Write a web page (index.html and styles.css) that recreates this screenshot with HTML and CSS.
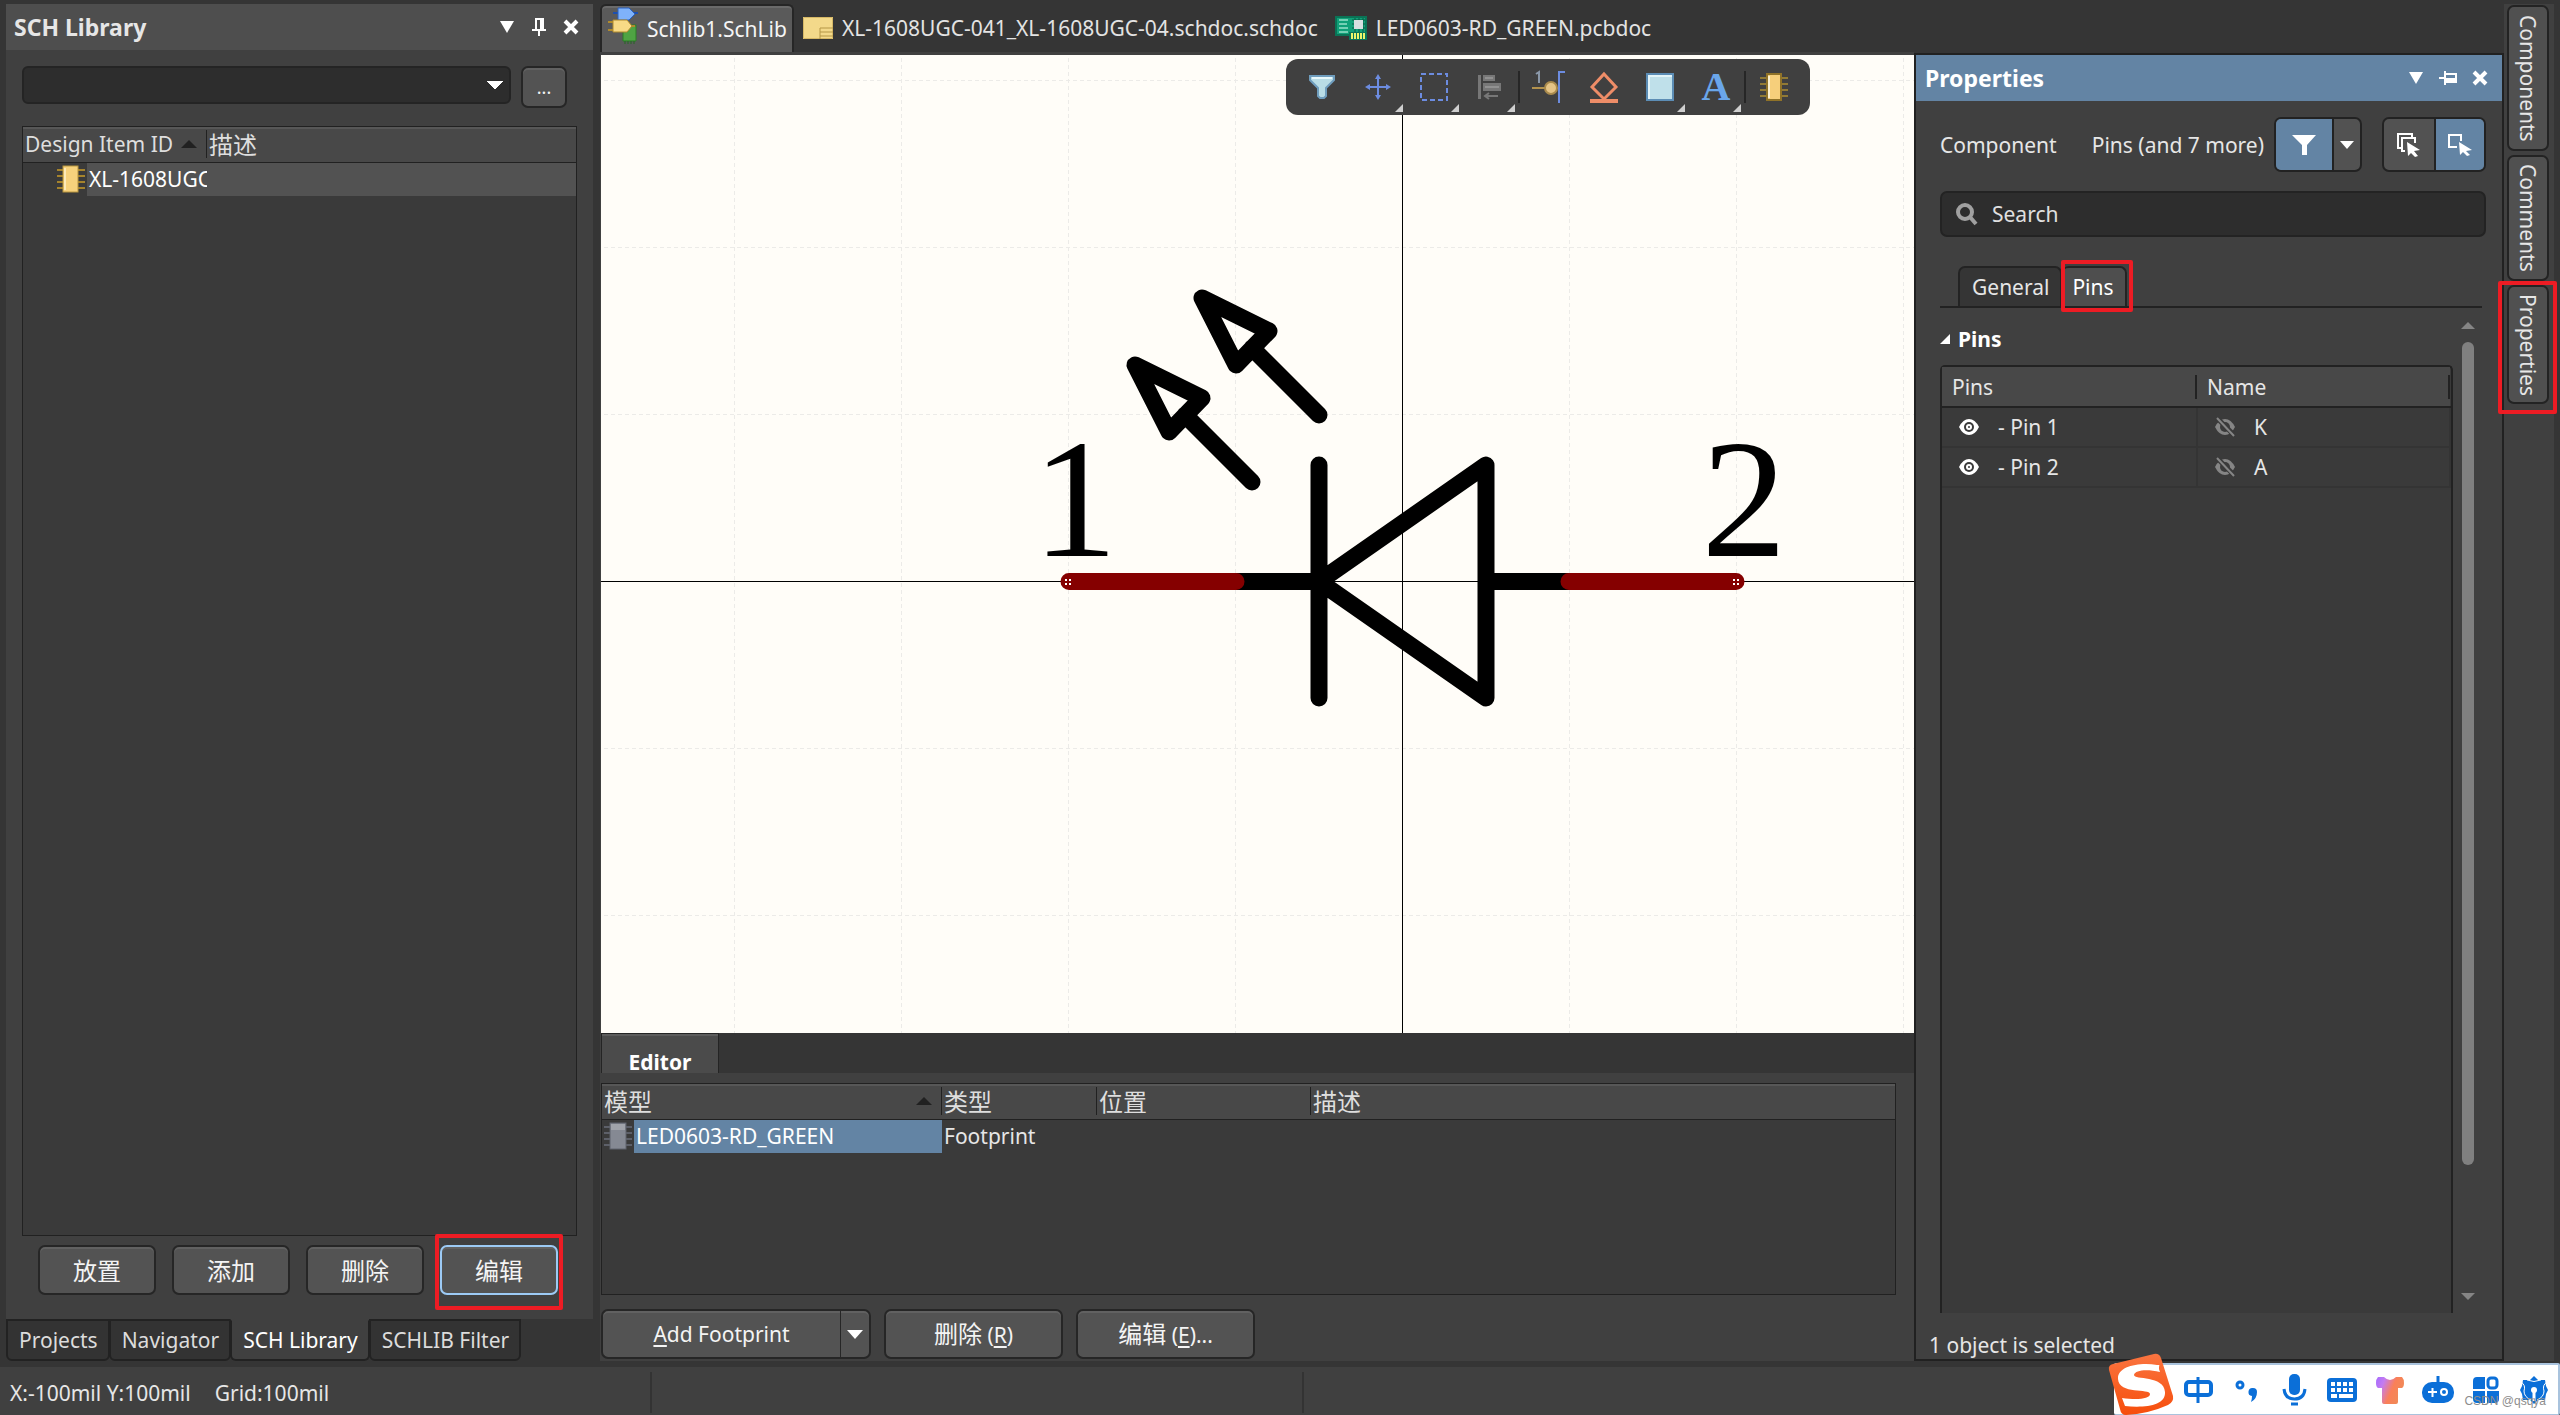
FILE: index.html
```html
<!DOCTYPE html>
<html lang="zh-CN">
<head>
<meta charset="utf-8">
<title>Schlib1.SchLib</title>
<link rel="stylesheet" href="styles.css">
</head>
<body>
<main class="workspace">
  <section class="library">
    <div class="library-panel">
      <header class="panel-title">
        <h2>SCH Library</h2>
        <button class="icon-btn" aria-label="Menu"><svg width="14" height="12"><path d="M0 0h14L7 12z" fill="#fff"/></svg></button>
        <button class="icon-btn" aria-label="Pin"><svg width="14" height="18"><path d="M3 0h9v11h2v2H8v5H6v-5H0v-2h3z" fill="#fff"/><path d="M5 2h3v9H5z" fill="#4e4e4e"/></svg></button>
        <button class="icon-btn" aria-label="Close"><svg width="16" height="16"><path d="M2 2l12 12M14 2L2 14" stroke="#fff" stroke-width="4"/></svg></button>
      </header>
      <div class="library-body">
        <div class="library-filter">
          <select class="combo" aria-label="Library"><option></option></select>
          <button class="btn more">...</button>
        </div>
        <div class="grid-box library-grid">
          <table class="data">
            <colgroup><col class="c-id"><col></colgroup>
            <thead><tr><th><span class="th-cell">Design Item ID<i class="sort"></i></span></th><th class="cjk">描述</th></tr></thead>
            <tbody><tr><td><span class="item">
              <svg width="28" height="28"><path d="M0 5h28M0 11h28M0 17h28M0 23h28" stroke="#a5832c" stroke-width="2"/><rect x="6" y="1" width="15" height="26" fill="#f7d27c" stroke="#b8953f"/><path d="M8 3v22" stroke="#fdeab8" stroke-width="2"/></svg>
              <span class="item-name">XL-1608UGC</span></span></td><td class="lit"></td></tr></tbody>
          </table>
        </div>
        <div class="library-actions">
          <button class="btn cjk">放置</button>
          <button class="btn cjk">添加</button>
          <button class="btn cjk">删除</button>
          <button class="btn cjk focused marked">编辑</button>
        </div>
      </div>
    </div>
    <nav class="panel-tabs">
      <button>Projects</button><button>Navigator</button><button class="on">SCH Library</button><button>SCHLIB Filter</button>
    </nav>
  </section>

  <section class="document">
    <nav class="doc-tabs">
      <button class="doc-tab on">
        <svg width="30" height="46"><path d="M5 7h25M6 17h8" stroke="#1d4fae" stroke-width="2"/><path d="M10 2h11l6 6-6 6H10z" fill="#7fb2fa" stroke="#2a61bf"/><path d="M15 19h13v16H15z" fill="#4fa343" stroke="#2b7d27"/><path d="M17 35v3M20 35v3M23 35v3M26 35v3" stroke="#226b20"/><path d="M0 16h8M0 24h8M20 20h7" stroke="#b08a2d" stroke-width="2"/><path d="M5 14h14l5 6-5 6H5z" fill="#f8da86" stroke="#b08a2d"/></svg>
        Schlib1.SchLib</button>
      <button class="doc-tab">
        <svg width="30" height="24"><path d="M0 1h30v22H0z" fill="#f3d98a"/><path d="M.5 1.500h29v21H.5z" fill="none" stroke="#d6b866"/><path d="M17 23V12h13M17 16h13M17 20h13" stroke="#b59747" fill="none"/></svg>
        XL-1608UGC-041_XL-1608UGC-04.schdoc.schdoc</button>
      <button class="doc-tab">
        <svg width="32" height="26"><path d="M0 1h32v20H0z" fill="#10a078"/><path d="M1 2h30v18H1z" fill="none" stroke="#0a7356" stroke-width="2"/><path d="M4 5h9M4 9h8M4 13h9M4 17h9" stroke="#d9fff0"/><path d="M17 5h13M17 9h13M17 13h13M20 3v14M24 3v14M28 3v14" stroke="#075b43"/><path d="M19 5h9v9h-9z" fill="#d5dfe0"/><path d="M14 17h18v8H14z" fill="#08765a"/><path d="M17 18v6M20 18v6M23 18v6M26 18v6M29 18v6" stroke="#e9f56b" stroke-width="2"/></svg>
        LED0603-RD_GREEN.pcbdoc</button>
    </nav>
    <div class="document-body">
      <div class="canvas">
        <svg class="drawing" viewBox="601 55 1313 978" preserveAspectRatio="xMidYMid slice">
          <g stroke="#ecebe8" stroke-dasharray="4 3">
            <path d="M734.500 58V1033M901.500 58V1033M1068.500 58V1033M1235.500 58V1033M1569.500 58V1033M1736.500 58V1033M1903.500 58V1033M604 80.500H1914M604 247.500H1914M604 414.500H1914M604 748.500H1914M604 915.500H1914"/>
          </g>
          <path d="M1402.500 55V1033M601 581.500H1914" stroke="#000"/>
          <g fill="none" stroke="#000" stroke-width="17" stroke-linecap="round" stroke-linejoin="round">
            <path d="M1235 581.500H1319M1486 581.500H1570M1319 465V698M1486 465V698L1319 581.500z"/>
            <path d="M1202 298L1269 331L1236 365zM1252 348L1319 415"/>
            <path d="M1135 365L1202 398L1169 432zM1185 415L1252 482"/>
            <path d="M1069 581.500H1236M1569 581.500H1736" stroke="#850000"/>
          </g>
          <path d="M1065 579h2v2h-2zM1069 579h2v2h-2zM1065 583h2v2h-2zM1069 583h2v2h-2zM1733 579h2v2h-2zM1737 579h2v2h-2zM1733 583h2v2h-2zM1737 583h2v2h-2z" fill="#fff"/>
          <text class="pin-no" x="1075" y="556" text-anchor="middle">1</text>
          <text class="pin-no" x="1744" y="556" text-anchor="middle">2</text>
        </svg>
        <div class="toolbar">
          <button aria-label="Filter"><svg width="32" height="32"><path d="M4 5h24v4l-8 8v8l-2 2h-4l-2-2v-8L4 9z" fill="#b9dde6" stroke="#6f9dbd" stroke-width="2"/><path d="M6 7h20" stroke="#e8f8fb" stroke-width="2"/></svg></button>
          <button class="has-menu" aria-label="Move"><svg width="32" height="32"><path d="M16 5v22M5 16h22" stroke="#6c8ce0" stroke-width="2"/><path d="M16 3l3 5h-6zM16 29l3-5h-6zM3 16l5-3v6zM29 16l-5-3v6z" fill="#6c8ce0"/></svg></button>
          <button class="has-menu" aria-label="Select"><svg width="32" height="32"><rect x="3" y="3" width="26" height="26" fill="none" stroke="#6c8ce0" stroke-width="2" stroke-dasharray="5 3"/></svg></button>
          <button class="has-menu" aria-label="Align"><svg width="32" height="32"><path d="M4 4h3v24H4zM9 4h12v6H9zM9 12h18v8H9z" fill="#777"/><path d="M11 7h8M11 16h14" stroke="#919191" stroke-width="2"/><path d="M11 25h13M15 22l-4 3 4 3" stroke="#777" stroke-width="2" fill="none"/></svg></button>
          <i class="divider"></i>
          <button aria-label="Place pin"><svg width="34" height="34"><path d="M1 18h15" stroke="#b3924d" stroke-width="2"/><circle cx="20" cy="18" r="6" fill="#e5c486" stroke="#a98a4c" stroke-width="2"/><path d="M28 33V2h6" stroke="#6c8ce0" stroke-width="2" fill="none"/><path d="M5 4l3-2v11" stroke="#8a97a8" stroke-width="2" fill="none"/></svg></button>
          <button aria-label="Directive"><svg width="34" height="34"><path d="M17 4l12 13-12 12L5 17z" fill="none" stroke="#ee8d68" stroke-width="3"/><path d="M3 29h28v4H3z" fill="#ee8d68"/></svg></button>
          <button class="has-menu" aria-label="Rectangle"><svg width="32" height="32"><rect x="3" y="3" width="26" height="26" fill="#bfe0ea" stroke="#5c8db5" stroke-width="2"/><path d="M5 28V5h23" fill="none" stroke="#e3f5fa" stroke-width="2"/></svg></button>
          <button class="has-menu text-tool" aria-label="Text">A</button>
          <i class="divider"></i>
          <button aria-label="Component"><svg width="32" height="32"><path d="M2 7h28M2 13h28M2 19h28M2 25h28" stroke="#917a35" stroke-width="2"/><rect x="9" y="3" width="14" height="26" fill="#f6cf7b" stroke="#8f7228" stroke-width="2"/><path d="M11 5v22" stroke="#fdf1cf" stroke-width="2"/></svg></button>
        </div>
      </div>
      <div class="editor">
        <div class="editor-tabs"><button>Editor</button></div>
        <div class="grid-box editor-grid">
          <table class="data">
            <colgroup><col class="c-model"><col class="c-type"><col class="c-place"><col></colgroup>
            <thead><tr><th class="cjk"><span class="th-cell">模型<i class="sort"></i></span></th><th class="cjk">类型</th><th class="cjk">位置</th><th class="cjk">描述</th></tr></thead>
            <tbody><tr><td><span class="item">
              <svg width="28" height="28"><path d="M0 5h28M0 11h28M0 17h28M0 23h28" stroke="#5d6069" stroke-width="2"/><rect x="6" y="1" width="16" height="26" fill="#858993" stroke="#5f636d"/><path d="M7 8h14V2H7z" fill="#a0a3aa"/></svg>
              <span class="item-name">LED0603-RD_GREEN</span></span></td><td>Footprint</td><td></td><td></td></tr></tbody>
          </table>
        </div>
        <div class="editor-actions">
          <div class="split"><button class="btn main"><span><u>A</u>dd Footprint</span></button><button class="btn drop" aria-label="More"><svg width="16" height="9"><path d="M0 0h16L8 9z" fill="#fff"/></svg></button></div>
          <button class="btn wide"><span><span class="cjk">删除</span> (<u>R</u>)</span></button>
          <button class="btn wide"><span><span class="cjk">编辑</span> (<u>E</u>)...</span></button>
        </div>
      </div>
    </div>
  </section>

  <aside class="properties">
    <header class="panel-title active">
      <h2>Properties</h2>
      <button class="icon-btn" aria-label="Menu"><svg width="14" height="12"><path d="M0 0h14L7 12z" fill="#fff"/></svg></button>
      <button class="icon-btn" aria-label="Pin"><svg width="18" height="14"><path d="M18 2v10H7v2H5V8H0V6h5V0h2v2z" fill="#fff"/><path d="M7 4h9v3H7z" fill="#6384a4"/></svg></button>
      <button class="icon-btn" aria-label="Close"><svg width="16" height="16"><path d="M2 2l12 12M14 2L2 14" stroke="#fff" stroke-width="4"/></svg></button>
    </header>
    <div class="object-row">
      <span>Component</span><span class="scope">Pins (and 7 more)</span>
      <div class="group"><button class="blue filter" aria-label="Filter"><svg width="24" height="22"><path d="M0 1h24l-9 10v10H10V11z" fill="#fff"/></svg></button><button class="narrow" aria-label="Filter menu"><svg width="14" height="8"><path d="M0 0h14L7 8z" fill="#fff"/></svg></button></div>
      <div class="group"><button class="pick" aria-label="Select all kinds"><svg width="26" height="26"><path d="M6 16H2V2h14v3M9 19H6V6h13v5" fill="none" stroke="#fff" stroke-width="2"/><path d="M11 10l13 8-6 1 4 5-3 1-4-4-3 3z" fill="#fff"/></svg></button><button class="blue pick" aria-label="Select one"><svg width="26" height="26"><path d="M10 15H2V3h12v6" fill="none" stroke="#fff" stroke-width="2"/><path d="M12 10l13 8-6 1 4 4-3 1-4-4-3 3z" fill="#fff"/></svg></button></div>
    </div>
    <label class="search"><svg width="24" height="24"><circle cx="10" cy="10" r="7" fill="none" stroke="#a0a0a0" stroke-width="4"/><path d="M15 15l6 7" stroke="#a0a0a0" stroke-width="4"/></svg><input type="text" placeholder="Search" aria-label="Search"></label>
    <nav class="prop-tabs"><button>General</button><button class="on marked">Pins</button></nav>
    <div class="prop-body">
      <div class="prop-main">
        <h3><svg width="10" height="10"><path d="M10 0v10H0z" fill="#fff"/></svg>Pins</h3>
        <div class="pin-box">
          <table class="pins">
            <colgroup><col class="c-pin"><col></colgroup>
            <thead><tr><th>Pins</th><th>Name</th></tr></thead>
            <tbody>
              <tr><td><span class="cell"><svg class="eye" width="20" height="18"><path d="M0 9Q4 1 10 1t10 8Q16 17 10 17T0 9z" fill="#fff"/><circle cx="10" cy="9" r="5" fill="#3a3a3a"/><circle cx="10" cy="9" r="3" fill="#fff"/><circle cx="10" cy="9" r="1" fill="#3a3a3a"/></svg>- Pin 1</span></td><td><span class="cell"><svg class="hid" width="20" height="20"><path d="M0 10Q4 2 10 2t10 8Q16 18 10 18T0 10z" fill="#858585"/><circle cx="10" cy="10" r="5" fill="#3a3a3a"/><path d="M2 1l18 18" stroke="#3a3a3a" stroke-width="5"/><path d="M2 1l17 18" stroke="#858585" stroke-width="2"/></svg>K</span></td></tr>
              <tr><td><span class="cell"><svg class="eye" width="20" height="18"><path d="M0 9Q4 1 10 1t10 8Q16 17 10 17T0 9z" fill="#fff"/><circle cx="10" cy="9" r="5" fill="#3a3a3a"/><circle cx="10" cy="9" r="3" fill="#fff"/><circle cx="10" cy="9" r="1" fill="#3a3a3a"/></svg>- Pin 2</span></td><td><span class="cell"><svg class="hid" width="20" height="20"><path d="M0 10Q4 2 10 2t10 8Q16 18 10 18T0 10z" fill="#858585"/><circle cx="10" cy="10" r="5" fill="#3a3a3a"/><path d="M2 1l18 18" stroke="#3a3a3a" stroke-width="5"/><path d="M2 1l17 18" stroke="#858585" stroke-width="2"/></svg>A</span></td></tr>
            </tbody>
          </table>
        </div>
      </div>
      <div class="scroll"><i class="up"></i><div class="track"><div class="thumb"></div></div><i class="down"></i></div>
    </div>
    <footer>1 object is selected</footer>
  </aside>

  <nav class="side-tabs"><button class="s1">Components</button><button class="s2">Comments</button><button class="s3 marked">Properties</button></nav>
</main>

<footer class="status"><div class="st-a"><span>X:-100mil Y:100mil</span><span>Grid:100mil</span></div><div class="st-b"></div><div></div></footer>

<div class="ime">
  <svg class="ime-logo" width="66" height="62" viewBox="0 0 66 62"><defs><linearGradient id="lg" x1="0" y1="1" x2="0" y2="0"><stop offset="0" stop-color="#f64e0c"/><stop offset="1" stop-color="#fa7440"/></linearGradient></defs><path d="M5 11L46 1q5-1 7 4l12 38q1 6-5 9-20 9-42 10-5 0-6-6L1 17q-1-5 4-6z" fill="url(#lg)"/><path d="M49 12c5 0 0 0 3 7-13-3-25-2-26 3 0 5 30 0 31 17 1 14-21 16-40 14l-3-8c15 2 28 1 28-4 0-6-31 1-32-15-1-13 22-17 39-14z" fill="#fff"/></svg>
  <button aria-label="中文"><svg width="32" height="32"><rect x="4" y="8" width="25" height="13" rx="3" fill="none" stroke="#0b6fd8" stroke-width="4"/><path d="M16 3v26" stroke="#0b6fd8" stroke-width="3"/></svg></button>
  <button aria-label="标点"><svg width="32" height="32"><circle cx="10" cy="11" r="3" fill="none" stroke="#0b6fd8" stroke-width="3"/><path d="M23 14a4 4 0 0 1 4 4q0 7-6 10 1-3 1-6a4 4 0 0 1 1-8z" fill="#0b6fd8"/></svg></button>
  <button aria-label="语音"><svg width="32" height="36"><rect x="11" y="2" width="11" height="21" rx="5" fill="#0b6fd8"/><path d="M6 17q1 10 10.500 10T27 17" fill="none" stroke="#0b6fd8" stroke-width="3"/><path d="M13 32h7" stroke="#0b6fd8" stroke-width="3"/></svg></button>
  <button aria-label="键盘"><svg width="32" height="32"><rect x="1" y="4" width="30" height="24" rx="4" fill="#0b6fd8"/><path d="M5 8h4v4H5zM11 8h4v4h-4zM17 8h4v4h-4zM23 8h4v4h-4zM5 14h4v4H5zM11 14h4v4h-4zM17 14h4v4h-4zM23 14h4v4h-4zM5 20h6v4H5zM13 20h14v4H13z" fill="#fff"/></svg></button>
  <button aria-label="皮肤"><svg width="32" height="32"><defs><linearGradient id="sg" x1="0" y1="0" x2="1" y2=".4"><stop offset="0" stop-color="#a56bff"/><stop offset=".3" stop-color="#c47cf0"/><stop offset=".65" stop-color="#fa8058"/><stop offset="1" stop-color="#f08a58"/></linearGradient></defs><path d="M4 3h6q6 6 12 0h6q2 2 2 6t-2 5h-4v14q0 2-2 2H10q-2 0-2-2V14H4q-2-1-2-5t2-6z" fill="url(#sg)"/></svg></button>
  <button aria-label="助手"><svg width="34" height="32"><path d="M17 2v8" stroke="#0b6fd8" stroke-width="3"/><rect x="1" y="8" width="32" height="21" rx="10" fill="#0b6fd8"/><path d="M7 18h9M11.500 14v9" stroke="#fff" stroke-width="2"/><circle cx="23" cy="18" r="3" fill="none" stroke="#fff" stroke-width="2"/></svg></button>
  <button aria-label="工具"><svg width="32" height="32"><path d="M7 3h8v12H3V7q0-4 4-4zM3 17h12v12H7q-4 0-4-4zM17 17h12v8q0 4-4 4h-8z" fill="#0b6fd8"/><rect x="18" y="4" width="9" height="10" rx="3" fill="none" stroke="#0b6fd8" stroke-width="3"/></svg></button>
  <button aria-label="设置"><svg width="32" height="32"><path d="M16 2l4 4h7l1 6 2 4-2 4-1 6h-7l-4 4-4-4H5l-1-6-2-4 2-4 1-6h7z" fill="#0b6fd8"/><path d="M3 8q5 3 3 9 0 6 7 9M29 8q-5 3-3 9 0 6-7 9M9 6q7 3 14 0" fill="none" stroke="#fff"/><circle cx="16" cy="16" r="3" fill="#fff"/><path d="M16 16v11" stroke="#fff" stroke-width="3"/></svg></button>
  <span class="credit">CSDN @qsqya</span>
</div>
</body>
</html>
```
FILE: styles.css
```css
* { box-sizing: border-box; }
html, body { margin: 0; height: 100%; }
body {
  display: flex; flex-direction: column; position: relative; overflow: hidden;
  background: #353535; color: #e6e6e6;
  font: 21px/28px "Noto Sans", "Noto Sans CJK SC", sans-serif;
}
button, input, select { font: inherit; color: inherit; margin: 0; padding: 0; }
button { background: none; border: 0; white-space: nowrap; }
svg { display: block; flex: none; }
h2, h3 { margin: 0; font-size: 21px; line-height: 28px; font-weight: 700; }
h2 { font-size: 23px; }
.cjk { font-family: "Noto Sans CJK SC", sans-serif; font-size: 24px; }

.workspace { flex: 1; min-height: 0; display: grid; grid-template-columns: 594px minmax(0, 1fr) 590px 50px; padding: 4px 6px 6px; }

/* shared pieces */
.panel-title { display: flex; align-items: center; height: 46px; padding: 0 14px 0 8px; background: #4e4e4e; }
.panel-title h2 { flex: 1; }
.panel-title.active { background: #6384a4; color: #fff; padding: 0 14px 0 9px; }
.icon-btn { display: grid; place-items: center; width: 32px; height: 32px; }
.icon-btn:last-child { width: 16px; margin-left: 8px; }
.btn {
  display: flex; align-items: center; justify-content: center; color: #f4f4f4;
  height: 50px; border: 2px solid #262626; border-radius: 7px;
  background: #535353; box-shadow: inset 0 2px #616161;
}
.btn u { text-underline-offset: 3px; text-decoration-thickness: 2px; }
.grid-box { border: 1px solid #212121; background: #3a3a3a; }
.marked { position: relative; }
.marked::after { content: ""; position: absolute; border: 4px solid #ed1c24; border-radius: 2px; pointer-events: none; }

.data { width: 100%; border-collapse: collapse; table-layout: fixed; }
.data th {
  height: 35px; padding: 0 0 0 2px; text-align: left; font-weight: 400; color: #dedede;
  border-bottom: 1px solid #212121; line-height: 28px;
  background: linear-gradient(#212121, #212121) right 0 center / 1px 28px no-repeat, linear-gradient(#575757 2px, #484848 2px);
}
.data th:last-child { background: linear-gradient(#575757 2px, #484848 2px); }
.data td { height: 33px; padding: 0 0 0 2px; }
.data td:first-child { padding: 0; overflow: hidden; }
.th-cell { display: flex; align-items: center; justify-content: space-between; padding-right: 10px; }
.sort { border: 8px solid transparent; border-top: 0; border-bottom: 8px solid #212121; }
.item { display: flex; align-items: center; gap: 2px; }
.item-name { flex: 1; min-width: 0; height: 33px; line-height: 33px; padding-left: 2px; overflow: hidden; white-space: nowrap; color: #fff; }

/* library panel */
.library { display: flex; flex-direction: column; padding-right: 6px; }
.library-panel { flex: 1; display: flex; flex-direction: column; background: #404040; margin-right: 1px; }
.library-body { flex: 1; display: flex; flex-direction: column; padding: 16px 16px 24px; }
.library-filter { display: flex; gap: 10px; margin-bottom: 18px; padding-right: 10px; }
.combo {
  flex: 1; height: 38px; border: 2px solid #242424; border-radius: 6px; appearance: none;
  background: conic-gradient(from -42deg at 50% 100%, #fff 84deg, transparent 0) right 6px center / 16px 9px no-repeat, #2d2d2d;
}
.more { width: 46px; height: 42px; font-size: 18px; }
.library-grid { flex: 1; }
.c-id { width: 184px; }
.library-grid .item { padding-left: 34px; }
.library-grid .item-name, .lit { background: #525252; }
.library-actions { display: flex; gap: 16px; padding: 9px 19px 0 16px; }
.library-actions .btn { flex: 1; }
.focused { border-color: #9ccaf5; }
.library-actions .marked::after { inset: -13px -7px -17px -7px; }
.panel-tabs { display: flex; height: 42px; }
.panel-tabs button { border: 2px solid #222; border-radius: 0 0 6px 6px; margin-right: -1px; padding: 0 10px 0 11px; background: #333; color: #dcdcdc; }
.panel-tabs .on { background: #404040; border-top-color: #404040; color: #fff; }

/* documents */
.document { display: flex; flex-direction: column; min-width: 0; }
.doc-tabs { display: flex; height: 48px; }
.doc-tab { display: flex; align-items: center; gap: 9px; padding: 0 8px 0 9px; color: #e3e3e3; }
.doc-tab.on { background: #5a5a5a; border: 2px solid #262626; border-bottom: 0; border-radius: 6px 6px 0 0; box-shadow: inset 0 2px #6a6a6a; padding: 0 5px 0 6px; color: #f5f5f5; }
.document-body { flex: 1; display: flex; flex-direction: column; background: #404040; padding: 3px 0 0 1px; }
.canvas { flex: 1; position: relative; background: #fffdf8; overflow: hidden; }
.drawing { position: absolute; inset: 0; width: 100%; height: 100%; }
.pin-no { font: 170px "Liberation Serif", serif; }
.toolbar {
  position: absolute; top: 4px; right: 104px; display: flex; align-items: center; height: 56px;
  padding: 0 8px; background: #404040; border-radius: 12px;
}
.toolbar button { position: relative; display: grid; place-items: center; width: 56px; height: 56px; }
.toolbar .has-menu::after { content: ""; position: absolute; right: 3px; bottom: 3px; border: 4px solid; border-color: transparent #cfcfcf #cfcfcf transparent; }
.toolbar .text-tool { font: bold 40px/48px "Liberation Serif", serif; color: #6aa6ea; }
.divider { width: 2px; height: 32px; background: #262626; }

.editor { display: flex; flex-direction: column; height: 328px; }
.editor-tabs { height: 40px; background: #353535; display: flex; }
.editor-tabs button { width: 118px; background: #4b4b4b; border: 1px solid #242424; border-bottom: 0; box-shadow: inset 0 2px #5c5c5c; padding-top: 14px; font-weight: 700; color: #fff; }
.editor-grid { flex: 1; margin: 10px 18px 14px 0; }
.c-model { width: 340px; } .c-type { width: 155px; } .c-place { width: 214px; }
.editor-grid .item { padding-left: 2px; }
.editor-grid .item-name { background: #6384a4; }
.editor-actions { display: flex; gap: 13px; padding-bottom: 2px; }
.split { display: flex; width: 270px; }
.split .main { flex: 1; border-right: 0; border-radius: 7px 0 0 7px; }
.split .drop { width: 31px; border-left-width: 1px; border-radius: 0 7px 7px 0; }
.wide { width: 179px; }

/* properties */
.properties { margin-top: 49px; border: 2px solid #212121; background: #404040; display: flex; flex-direction: column; }
.object-row { display: flex; align-items: center; padding: 16px 16px 19px 24px; }
.scope { margin: 0 10px 0 auto; }
.group { display: flex; height: 55px; border: 2px solid #222; border-radius: 7px; overflow: hidden; background: #525252; }
.group + .group { margin-left: 20px; }
.group button { display: grid; place-items: center; }
.group button + button { border-left: 2px solid #222; }
.group .blue { background: #6384a4; }
.filter { width: 56px; } .narrow { width: 28px; } .pick { width: 50px; }
.search { display: flex; align-items: center; gap: 13px; height: 46px; margin: 0 16px 0 24px; padding: 0 13px; background: #2d2d2d; border: 2px solid #232323; border-radius: 7px; }
.search input { flex: 1; min-width: 0; background: none; border: 0; outline: 0; }
.search input::placeholder { color: #e0e0e0; opacity: 1; }
.prop-tabs { display: flex; height: 42px; margin: 29px 20px 0 24px; padding-left: 18px; border-bottom: 2px solid #222; }
.prop-tabs button { border: 2px solid #232323; border-bottom: 0; border-radius: 7px 7px 0 0; background: #353535; padding: 0 11px 0 12px; }
.prop-tabs .on { background: #4e4e4e; padding: 0 11px 0 10px; border-left: 0; color: #fff; }
.prop-tabs .marked::after { inset: -8px -8px -6px -1px; }
.prop-body { flex: 1; display: flex; gap: 8px; padding: 12px 27px 0 24px; }
.prop-main { flex: 1; display: flex; flex-direction: column; }
h3 { display: flex; align-items: center; gap: 8px; height: 38px; margin-bottom: 7px; color: #fff; }
.pin-box { flex: 1; border: 2px solid #222; border-bottom: 0; border-radius: 5px 5px 0 0; background: #3a3a3a; }
.pins { width: 100%; border-collapse: collapse; table-layout: fixed; }
.c-pin { width: 255px; }
.pins th { height: 40px; padding: 0 10px; text-align: left; font-weight: 400; border-bottom: 2px solid #222; background: linear-gradient(#222, #222) right 0 center / 2px 24px no-repeat, #484848; }
.pins td { height: 40px; padding: 0 17px; border-bottom: 2px solid #343434; border-right: 2px solid #343434; }
.cell { display: flex; align-items: center; gap: 19px; }
.scroll { display: flex; flex-direction: column; align-items: center; width: 14px; padding: 2px 0 13px; }
.up { border: 7px solid transparent; border-top: 0; border-bottom: 7px solid #858585; }
.down { border: 7px solid transparent; border-bottom: 0; border-top: 7px solid #858585; }
.track { flex: 1; width: 12px; margin: 13px 0 5px; }
.thumb { height: 87%; border-radius: 6px; background: #808080; }
.properties footer { padding: 18px 13px 0; height: 46px; line-height: 28px; }

.side-tabs { display: flex; flex-direction: column; gap: 4px; background: #404040; padding: 1px 5px 0 3px; }
.side-tabs button { writing-mode: vertical-rl; border: 2px solid #232323; border-radius: 7px; background: #505050; text-align: center; width: 42px; line-height: 36px; }
.s1 { height: 146px; } .s2 { height: 126px; } .s3 { height: 119px; }
.side-tabs .marked::after { inset: -6px -10px -12px -11px; }

/* status bar */
.status { display: flex; height: 48px; background: #404040; }
.status div { display: flex; gap: 24px; align-items: center; padding-left: 10px; margin: 5px 0 2px; }
.st-a { width: 652px; border-right: 2px solid #333; }
.st-b { width: 652px; border-right: 2px solid #333; }

/* input-method bar floating over the window corner */
.ime { position: absolute; right: 0; bottom: 0; display: flex; align-items: center; height: 52px; padding: 0 0 0 60px; background: #fff; border: solid #a9c3dd; border-width: 2px 2px 1px 0; border-radius: 2px; }
.ime button { display: grid; place-items: center; width: 48px; height: 48px; }
.ime-logo { position: absolute; left: -6px; bottom: -1px; }
.credit { position: absolute; right: 12px; bottom: 4px; font: 12px/18px "Liberation Sans", sans-serif; color: #8d8d8d; }
```
